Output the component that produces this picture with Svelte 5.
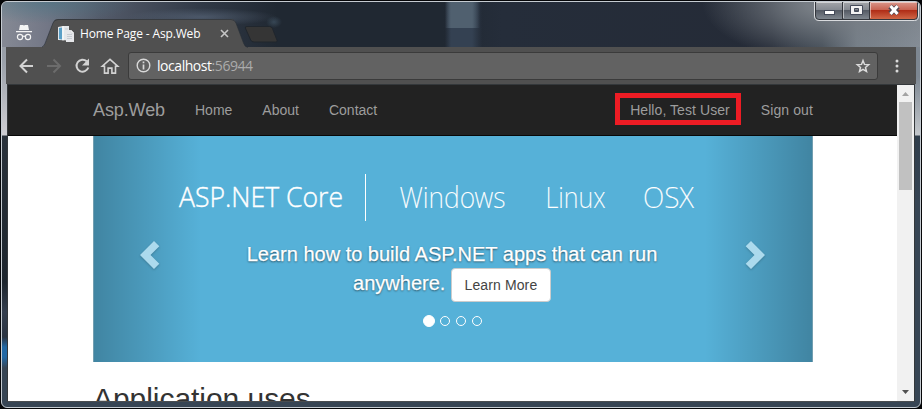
<script>
  const links = ['Home', 'About', 'Contact'];
  const banner = [
    { text: 'Windows', x: 306.5, width: 106 },
    { text: 'Linux', x: 452.5, width: 60 },
    { text: 'OSX', x: 550, width: 51 }
  ];
  const slides = [0, 1, 2, 3];
  let active = $state(0);
</script>

<div class="desktop">
  <div class="window">
    <header class="titlebar">
      <svg class="incognito" width="18" height="18" viewBox="0 0 18 18">
        <path d="M5 1h3l1 .6L10 1h3l1 5H4z" fill="#f4f4f4" />
        <path d="M1 7h16v1.3H1z" fill="#f4f4f4" />
        <g fill="none" stroke="#f4f4f4" stroke-width="1.2">
          <circle cx="5" cy="13" r="2.6" /><circle cx="13" cy="13" r="2.6" /><path d="M7.6 12.6q1.4-.8 2.8 0" />
        </g>
      </svg>
      <div class="tab">
        <svg class="tab-shape" width="206" height="29" viewBox="0 0 206 29">
          <path d="M0 28.5q2-.8 3-3.5L11 4q1.3-4 5-4h173q3.500 0 5 4l7.500 20q1.300 4 4.500 4.500V29H0z" fill="#505050" />
          <path d="M0 28q2-.8 3-3.500L11 4Q12.300.5 16 .5h173q3.500 0 5 3.500l7.500 20q1.300 4 4.500 4.500" fill="none" stroke="#292f37" stroke-opacity=".65" />
        </svg>
        <svg class="favicon" width="16" height="16" viewBox="0 0 16 16">
          <path d="M0 1l5-1h6v14.500L0 14z" fill="#e4e8eb" />
          <path d="M1 2l3-.5v12L1 13z" fill="#5a9fc6" />
          <path d="M4.500 0h1v14.500h-1z" fill="#fff" />
          <path d="M8 4h5l3 3v9H8z" fill="#e6e7ea" />
          <path d="M9 8.500h5M9 10.500h5M9 12.500h5M7 3h3" stroke="#c6ccd2" />
          <path d="M13 4v3h3" fill="#fff" stroke="#c9cdd1" stroke-width=".6" />
        </svg>
        <span class="title">Home Page - Asp.Web</span>
        <svg class="close" width="9" height="9" viewBox="0 0 9 9"><path d="M1 1l7 7M8 1L1 8" stroke="#c6c6c6" stroke-width="1.6" /></svg>
      </div>
      <svg class="newtab" width="34" height="17" viewBox="0 0 34 17">
        <path d="M3 .5h22.500q2 0 2.800 1.700l4.700 12q.5 1.800-1 1.800H10q-2.500 0-3.300-2L1.300 2Q1 .5 3 .5z" fill="#353535" stroke="#20262d" />
      </svg>
      <svg class="controls" width="106" height="20" viewBox="0 0 106 20">
        <defs>
          <linearGradient id="glass" x2="0" y2="1"><stop offset="0" stop-color="#a3a5a9" /><stop offset=".43" stop-color="#868b92" /><stop offset=".48" stop-color="#555b65" /><stop offset="1" stop-color="#828991" /></linearGradient>
          <linearGradient id="red" x2="0" y2="1"><stop offset="0" stop-color="#d9968a" /><stop offset=".43" stop-color="#c96554" /><stop offset=".48" stop-color="#b02d17" /><stop offset="1" stop-color="#d26a49" /></linearGradient>
        </defs>
        <path d="M1.500 0v14q0 3.500 3.500 3.500H29V0z" fill="url(#glass)" />
        <path d="M29 0h27v17.500H29z" fill="url(#glass)" />
        <path d="M56 0h47.500v14q0 3.500-3.500 3.500H56z" fill="url(#red)" />
        <path d="M1.500 0v14q0 3.500 3.500 3.500H100q3.500 0 3.500-3.500V0M28.500 0v17M55.500 0v17" fill="none" stroke="#33363c" />
        <path d="M.5 0v14q0 4.500 4.500 4.500h95.500q4 0 4-4.500V0" fill="none" stroke="#d9dbde" />
        <path d="M2.500.5H28M29.500.5H55M56.500.5H103M29.500 1v15M56.500 1v15" fill="none" stroke="#fff" stroke-opacity=".5" />
        <rect x="10.500" y="8.500" width="10" height="4" fill="#fff" stroke="#454b5a" />
        <path d="M36.500 3.500h12v9h-12zM40.500 6.500v3h4v-3z" fill="#f2f2f2" fill-rule="evenodd" stroke="#454b5a" />
        <path d="M76 4.500l8 7M84 4.500l-8 7" stroke="#4d4650" stroke-width="5" />
        <path d="M76.500 4l7 8M83.500 4l-7 8" stroke="#fff" stroke-width="3" />
      </svg>
    </header>

    <div class="toolbar">
      <svg class="nav-icons" width="104" height="20" viewBox="0 0 104 20" fill="none" stroke="#d2d2d2" stroke-width="2">
        <path d="M15 10H3M9 3.500L2.500 10 9 16.500" />
        <path d="M29 10h12M35.500 3.500L42 10l-6.500 6.500" stroke="#6c6c6c" />
        <path d="M68.700 5.300A6 6 0 1 0 70.300 11.500" />
        <path d="M71 2.500v7h-7z" fill="#d2d2d2" stroke="none" />
        <path d="M86.500 10.200v6.900h3.600v-5h3.800v5h3.600v-6.900h2.200L92 3.300l-7.700 6.900z" stroke-width="1.600" />
      </svg>
      <div class="omnibox">
        <svg width="15" height="15" viewBox="0 0 15 15"><circle cx="7.500" cy="7.500" r="6.300" fill="none" stroke="#d8d8d8" stroke-width="1.400" /><path d="M7.500 3.500v1.700M7.500 6.500v5" stroke="#d8d8d8" stroke-width="1.700" /></svg>
        <span class="url"><b>localhost</b>:56944</span>
        <svg class="star" width="16" height="16" viewBox="0 0 16 16"><path d="M8 2.500l1.500 3.900 4.200.3-3.200 2.700 1 4.100L8 11.300l-3.500 2.200 1-4.100-3.200-2.700 4.200-.3z" fill="none" stroke="#dcdcdc" stroke-width="1.500" /></svg>
      </div>
      <svg class="more" width="4" height="14" viewBox="0 0 4 14" fill="#dadada"><circle cx="2" cy="2" r="1.500" /><circle cx="2" cy="7" r="1.500" /><circle cx="2" cy="12" r="1.500" /></svg>
    </div>

    <div class="viewport">
      <main class="page">
        <nav class="navbar">
          <span class="brand">Asp.Web</span>
          {#each links as link}<span class="link">{link}</span>{/each}
          <span class="link user">Hello, Test User<i class="mark"></i></span>
          <span class="link out">Sign out</span>
        </nav>
        <section class="carousel">
          <div class="edge left">
            <svg width="20" height="30" viewBox="0 0 20 30"><path d="M14 1l5.300 5.300-8.800 8.700 8.800 8.700L14 29 0 15z" fill="#acdaed" /></svg>
          </div>
          <div class="slide">
            <svg class="banner" width="720" height="94" viewBox="0 0 720 94" fill="#fff">
              <text class="core" x="86" y="71" textLength="164" lengthAdjust="spacingAndGlyphs">ASP.NET Core</text>
              <path d="M272 38h1v47h-1z" />
              {#each banner as b}
                <text class="os" x={b.x} y="72" textLength={b.width} lengthAdjust="spacingAndGlyphs">{b.text}</text>
              {/each}
            </svg>
            <p class="caption">Learn how to build ASP.NET apps that can run<br />anywhere. <button>Learn More</button></p>
            <div class="dots">
              {#each slides as s}<span class:active={s === active}></span>{/each}
            </div>
          </div>
          <div class="edge right">
            <svg width="20" height="30" viewBox="0 0 20 30"><path d="M6 1L.7 6.300 9.500 15 .7 23.700 6 29l14-14z" fill="#acdaed" /></svg>
          </div>
        </section>
        <h2>Application uses</h2>
      </main>
      <aside class="scrollbar">
        <svg width="7" height="4" viewBox="0 0 7 4"><path d="M0 4L3.500 0 7 4z" fill="#a3a3a3" /></svg>
        <div class="thumb"></div>
        <svg class="down" width="7" height="4" viewBox="0 0 7 4"><path d="M0 0h7L3.500 4z" fill="#505050" /></svg>
      </aside>
    </div>
  </div>
</div>

<style>
  :global(body) { margin: 0; background: #000; }
  .desktop { box-sizing: border-box; width: 922px; height: 409px; padding: 1px; background: #050608; overflow: hidden; font-family: "Liberation Sans", Arial, sans-serif; }
  .window {
    box-sizing: border-box; width: 920px; height: 407px; border: 1px solid #c5cbd1; border-radius: 6px; overflow: hidden;
    background:
      linear-gradient(#8c929b 0, #9ba1aa 60px, #cfced2 133px, #2a323b 134px, #1d252d 280px, #343e4e 310px, #2a3341 335px, #2268a4 345px, #2268a4 355px, #374554 366px) 0 0 / 7px 100% no-repeat,
      linear-gradient(#7d8791 0, #7d8792 75px, #c4c8cc 133px, #303e4c 134px, #374554 200px) 100% 0 / 7px 100% no-repeat,
      #374554;
  }
  .titlebar {
    display: flex; height: 45px;
    background:
      radial-gradient(ellipse 90px 22px at 45px 0, rgba(72,116,132,.6), transparent),
      radial-gradient(ellipse 75px 9px at 200px 15px, rgba(94,108,128,.6), transparent),
      radial-gradient(ellipse 8px 6px at 272px 20px, rgba(65,84,100,.7), transparent),
      linear-gradient(90deg, transparent 443px, #50606f 449px, #50606f 470px, transparent 478px) 0 0 / 100% 26px no-repeat,
      linear-gradient(90deg, transparent 443px, #344152 449px, #344152 470px, transparent 480px),
      radial-gradient(ellipse 130px 60px at 830px 0, #777d84 20%, transparent),
      linear-gradient(90deg, #858994 0, #737786 45px, #535a69 100px, #303946 200px, #202832 275px, #202832 440px, #252d3a 500px, #252b37 770px, #3a444f 820px, #76808a 855px, #858d96 100%);
  }
  .titlebar > svg, .tab svg { flex: none; }
  .incognito { margin: 22px 0 0 13px; }
  .tab { position: relative; display: flex; align-items: center; width: 206px; height: 29px; margin: 17px 0 0 9px; flex: none; box-sizing: border-box; padding-left: 16px; }
  .tab-shape { position: absolute; left: 0; top: 0; }
  .favicon, .title, .close { position: relative; }
  .title { margin-left: 6px; width: 121px; color: #fff; font: 12px/16px "Open Sans", "Noto Sans", sans-serif; letter-spacing: -.15px; white-space: nowrap; }
  .close { margin-left: 19px; }
  .newtab { margin: 24px 0 0 -4px; }
  .controls { margin: 0 0 0 auto; }
  .toolbar { box-sizing: border-box; display: flex; align-items: center; height: 37px; margin: 0 4px; background: #505050; padding: 0 17px 0 12px; }
  .omnibox { box-sizing: border-box; display: flex; align-items: center; width: 750px; height: 28px; margin-left: 6px; padding: 0 6px 0 7px; border: 1px solid #3b3b3b; border-radius: 3px; background: #626262; }
  .url { margin-left: 6px; font: 14px/20px "Open Sans", "Noto Sans", sans-serif; color: #ababab; white-space: nowrap; letter-spacing: -.45px; }
  .url b { font-weight: 400; color: #fff; }
  .star { margin-left: auto; }
  .more { margin-left: auto; }
  .viewport { display: flex; box-sizing: border-box; height: 318px; margin: 0 5px; border: 1px solid #34383b; border-bottom-color: #4a4d50; background: #fff; overflow: hidden; }
  .page { width: 889px; flex: none; }
  .navbar { box-sizing: border-box; display: flex; height: 51px; padding: 0 84px 0 85px; background: #222; border-bottom: 1px solid #080808; color: #9d9d9d; font-size: 14px; line-height: 20px; white-space: nowrap; }
  .brand { box-sizing: border-box; width: 87px; padding: 15px 0; font-size: 18px; letter-spacing: -.1px; }
  .link { padding: 15px; }
  .user { position: relative; margin-left: auto; padding-right: 16px; letter-spacing: .07px; }
  .out { padding-right: 0; letter-spacing: .1px; }
  .mark { position: absolute; box-sizing: border-box; left: 0; top: 8px; width: 126px; height: 32px; border: 5px solid #ed1c24; }
  .carousel { box-sizing: border-box; display: flex; width: 720px; height: 226px; margin-left: 85px; background: #56b1d8; }
  .edge { box-sizing: border-box; width: 108px; display: flex; align-items: center; flex: none; padding-top: 12px; }
  .edge svg { filter: drop-shadow(0 1px 1px rgba(0,0,0,.2)); }
  .left { padding-left: 46px; border-left: 1px solid #729eb0; background: linear-gradient(90deg, rgba(0,0,0,.25), transparent); }
  .right { justify-content: flex-end; padding-right: 47px; border-right: 1px solid #729eb0; background: linear-gradient(270deg, rgba(0,0,0,.25), transparent); }
  .slide { display: flex; flex-direction: column; align-items: center; box-sizing: border-box; width: 504px; padding-right: 2px; }
  .banner { flex: none; margin: 0 -109px 0 -107px; }
  .core { font: 300 28px "Open Sans", sans-serif; stroke: #fff; stroke-width: .4px; }
  .os { font: 200 29px "Noto Sans", "Open Sans", sans-serif; stroke: #fff; stroke-width: .15px; }
  .caption { margin: 10px 0 0; color: #fff; text-align: center; font-size: 20px; line-height: 28px; text-shadow: 0 1px 2px rgba(0,0,0,.6); white-space: nowrap; -webkit-text-stroke: .25px #fff; }
  button { box-sizing: border-box; height: 34px; width: 100px; padding: 6px 0; border: 1px solid #ccc; border-radius: 4px; background: #fff; color: #444; font: 14px/20px "Liberation Sans", Arial, sans-serif; letter-spacing: .12px; vertical-align: middle; -webkit-text-stroke: 0; }
  .dots { display: flex; align-items: center; gap: 6px; margin-top: 13px; }
  .dots span { box-sizing: border-box; width: 10px; height: 10px; border: 1px solid #fff; border-radius: 50%; }
  .dots .active { width: 12px; height: 12px; margin-right: -1px; background: #fff; }
  h2 { margin: 20px 0 0 85px; color: #333; font-size: 30px; line-height: 33px; font-weight: 500; letter-spacing: -.05px; }
  .scrollbar { display: flex; flex-direction: column; align-items: center; width: 17px; background: #f1f1f1; box-sizing: border-box; padding: 7px 0; }
  .thumb { width: 13px; height: 88px; margin-top: 6px; background: #c1c1c1; }
  .down { margin-top: auto; }
</style>
